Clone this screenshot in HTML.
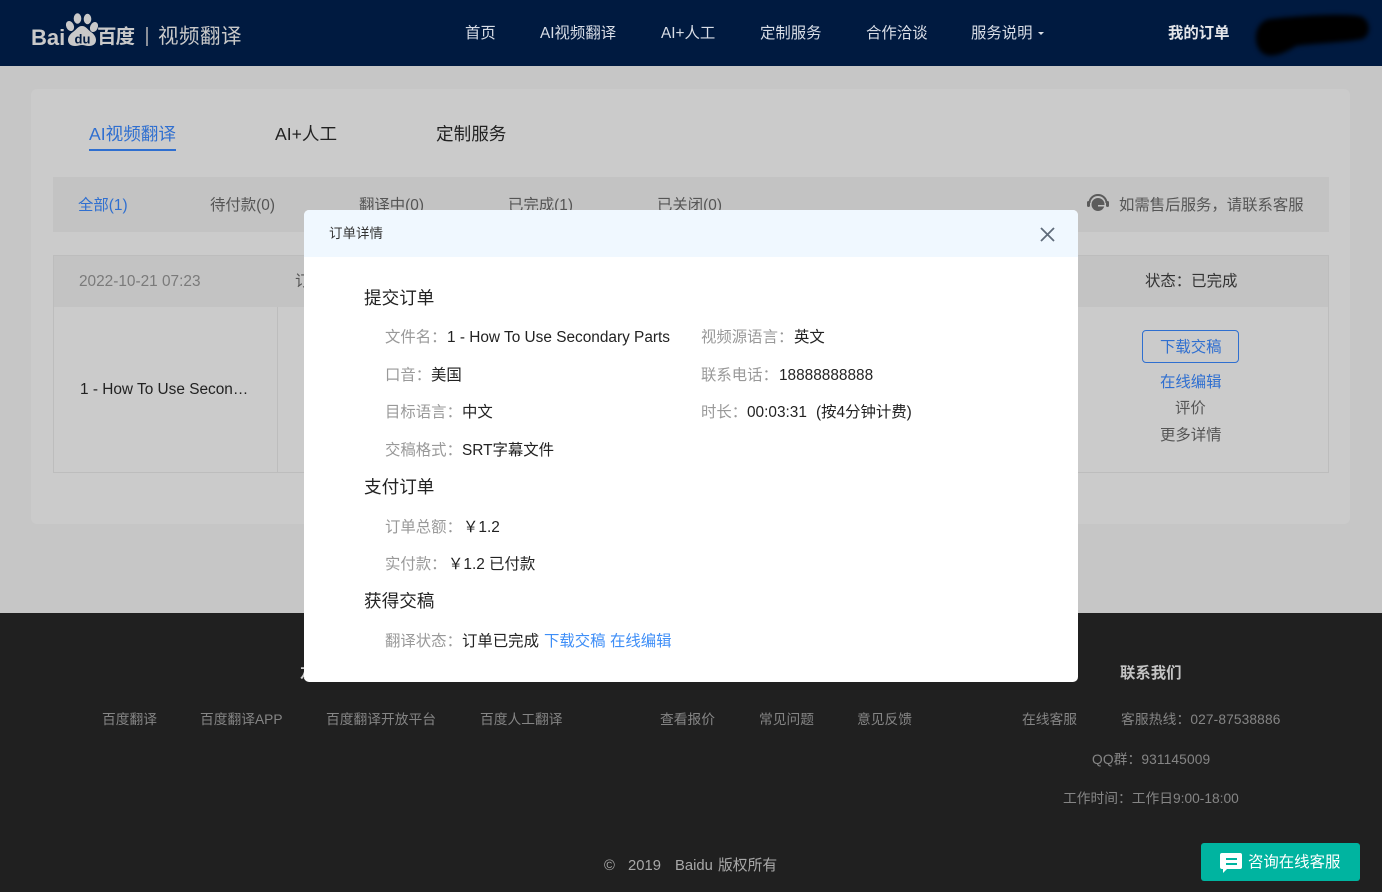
<!DOCTYPE html>
<html lang="zh"><head><meta charset="utf-8"><title>订单详情</title>
<style>
html,body{margin:0;padding:0}
body{width:1382px;height:892px;position:relative;overflow:hidden;background:#c6c6c6;font-family:"Liberation Sans","Noto Sans CJK SC",sans-serif;font-size:15.4px;color:#222}
.b{position:absolute}
.t{position:absolute;white-space:nowrap;line-height:22px;height:22px}
.g{color:#999}.d{color:#222}.bl{color:#2f6fd0}.lk{color:#3e8ef7}
.n{color:#d8dde6;top:23px}
.f{color:#858585;font-size:13.75px}
.m{color:#555}
.h{font-size:17.6px;line-height:24px;height:24px}
</style></head><body>
<!-- header -->
<div class="b" style="left:0;top:0;width:1382px;height:66px;background:#001a40"></div>
<svg class="b" style="left:28px;top:10px" width="112" height="40" viewBox="0 0 112 40">
<g fill="#c9c9c9"><ellipse cx="49.500" cy="8.500" rx="3.800" ry="5.200"/><ellipse cx="59.500" cy="9" rx="3.800" ry="5.200"/><ellipse cx="42" cy="16" rx="3.800" ry="5.200" transform="rotate(-25 42 16)"/><ellipse cx="66" cy="17" rx="3.800" ry="5.200" transform="rotate(25 66 17)"/><path d="M54 16c4 0 6 4 9 6 3 2 5 5 5 8 0 4-3 6-7 6-3 0-5-1-7-1s-4 1-7 1c-4 0-7-2-7-6 0-3 2-6 5-8 3-2 5-6 9-6z"/></g>
<text x="3" y="35" font-family="Liberation Sans" font-weight="700" font-size="22" fill="#c9c9c9">Bai</text>
<text x="46.500" y="33.500" font-family="Liberation Sans" font-weight="700" font-size="13" fill="#001a40">du</text>
</svg>
<div class="t" style="left:97px;top:26px;font-size:19.500px;line-height:22px;height:22px;color:#c9c9c9;font-weight:700;letter-spacing:-1px">百度</div>
<div class="b" style="left:146px;top:27px;width:2px;height:19px;background:#8a8f99"></div>
<div class="t" style="left:158px;top:25px;font-size:20.500px;line-height:24px;height:24px;color:#c9c9c9;letter-spacing:.5px">视频翻译</div>
<div class="t n" style="left:465px">首页</div>
<div class="t n" style="left:540px">AI视频翻译</div>
<div class="t n" style="left:661px">AI+人工</div>
<div class="t n" style="left:760px">定制服务</div>
<div class="t n" style="left:866px">合作洽谈</div>
<div class="t n" style="left:971px">服务说明</div>
<div class="b" style="left:1038px;top:32px;border-left:3px solid transparent;border-right:3px solid transparent;border-top:3px solid #d8dde6"></div>
<div class="t" style="left:1168px;top:23px;color:#e4e6ea;font-weight:700">我的订单</div>
<svg class="b" style="left:1245px;top:5px" width="135" height="65"><path d="M24 14C50 11 95 8 114 11c12 2 13 20 3 23-20 4-46 4-66 7-6 4-20 12-30 9C7 45 7 18 24 14z" fill="#000" style="filter:blur(2.500px)"/></svg>
<!-- main card -->
<div class="b" style="left:31px;top:89px;width:1319px;height:435px;background:#cbcbcb;border-radius:6px"></div>
<div class="t bl h" style="left:89px;top:122px">AI视频翻译</div>
<div class="b" style="left:89px;top:149px;width:87px;height:2px;background:#2f6fd0"></div>
<div class="t d h" style="left:275px;top:122px">AI+人工</div>
<div class="t d h" style="left:436px;top:122px">定制服务</div>
<div class="b" style="left:53px;top:177px;width:1276px;height:55px;background:#c3c3c3"></div>
<div class="t bl" style="left:78px;top:195px">全部(1)</div>
<div class="t m" style="left:210px;top:195px">待付款(0)</div>
<div class="t m" style="left:359px;top:195px">翻译中(0)</div>
<div class="t m" style="left:508px;top:195px">已完成(1)</div>
<div class="t m" style="left:657px;top:195px">已关闭(0)</div>
<svg class="b" style="left:1086px;top:193px" width="24" height="20" viewBox="0 0 24 20"><path d="M3.500 10a8.500 8 0 0 1 17 0" fill="none" stroke="#5b5b5b" stroke-width="2"/><rect x="1" y="8" width="3" height="6" rx="1.500" fill="#5b5b5b"/><rect x="20" y="8" width="3" height="6" rx="1.500" fill="#5b5b5b"/><circle cx="12" cy="11.500" r="6.500" fill="#5b5b5b"/><rect x="12" y="12" width="7" height="1.500" fill="#c3c3c3"/></svg>
<div class="t m" style="left:1119px;top:195px">如需售后服务，请联系客服</div>
<!-- order table -->
<div class="b" style="left:53px;top:255px;width:1274px;height:216px;border:1px solid #bdbdbd"></div>
<div class="b" style="left:54px;top:256px;width:1274px;height:51px;background:#c3c3c3"></div>
<div class="b" style="left:277px;top:307px;width:1px;height:165px;background:#bdbdbd"></div>
<div class="t" style="left:79px;top:271px;color:#7a7a7a">2022-10-21 07:23</div>
<div class="t m" style="left:295px;top:271px">订</div>
<div class="t d" style="left:80px;top:379px">1 - How To Use Secon…</div>
<div class="t" style="left:1145px;top:271px;color:#333">状态：已完成</div>
<div class="b" style="left:1142px;top:330px;width:95px;height:31px;border:1px solid #2f6fd0;border-radius:4px"></div>
<div class="t bl" style="left:1160px;top:337px">下载交稿</div>
<div class="t bl" style="left:1160px;top:372px">在线编辑</div>
<div class="t m" style="left:1175px;top:398px">评价</div>
<div class="t m" style="left:1160px;top:425px">更多详情</div>
<!-- footer -->
<div class="b" style="left:0;top:613px;width:1382px;height:279px;background:#202020"></div>
<div class="t" style="left:300px;top:663px;color:#d0d0d0;font-weight:700">友</div>
<div class="t" style="left:1120px;top:663px;color:#c4c4c4;font-weight:700">联系我们</div>
<div class="t f" style="left:102px;top:709px">百度翻译</div>
<div class="t f" style="left:200px;top:709px">百度翻译APP</div>
<div class="t f" style="left:326px;top:709px">百度翻译开放平台</div>
<div class="t f" style="left:480px;top:709px">百度人工翻译</div>
<div class="t f" style="left:660px;top:709px">查看报价</div>
<div class="t f" style="left:759px;top:709px">常见问题</div>
<div class="t f" style="left:857px;top:709px">意见反馈</div>
<div class="t f" style="left:1022px;top:709px">在线客服</div>
<div class="t f" style="left:1121px;top:709px;letter-spacing:.12px">客服热线：027-87538886</div>
<div class="t f" style="left:1092px;top:749px;letter-spacing:.12px">QQ群：931145009</div>
<div class="t f" style="left:1063px;top:788px">工作时间：工作日9:00-18:00</div>
<div class="t" style="left:604px;top:855px;color:#a8a8a8;font-size:14.800px">©</div>
<div class="t" style="left:628px;top:855px;color:#a8a8a8;font-size:14.800px">2019</div>
<div class="t" style="left:675px;top:855px;color:#a8a8a8;font-size:14.800px">Baidu</div>
<div class="t" style="left:718px;top:855px;color:#a8a8a8;font-size:14.800px">版权所有</div>
<!-- consult -->
<div class="b" style="left:1201px;top:843px;width:159px;height:38px;background:#00b4a0;border-radius:3px"></div>
<svg class="b" style="left:1220px;top:853px" width="23" height="22" viewBox="0 0 23 22"><path d="M2 0h18a2 2 0 0 1 2 2v12a2 2 0 0 1-2 2H7l-4 4v-4H2a2 2 0 0 1-2-2V2a2 2 0 0 1 2-2z" fill="#fff"/><rect x="6" y="5" width="11" height="2" fill="#00b4a0"/><rect x="6" y="10" width="11" height="2" fill="#00b4a0"/></svg>
<div class="t" style="left:1248px;top:852px;color:#fff;font-size:15.400px">咨询在线客服</div>
<!-- modal -->
<div class="b" style="left:304px;top:210px;width:774px;height:472px;background:#fff;border-radius:5px;overflow:hidden">
<div class="b" style="left:0;top:0;width:774px;height:47px;background:#f0f8ff"></div>
</div>
<div class="t" style="left:329px;top:223px;font-size:13.500px;color:#333">订单详情</div>
<svg class="b" style="left:1040px;top:227px" width="15" height="15"><path d="M1 1l13 13M14 1L1 14" stroke="#5f6b7a" stroke-width="1.800" fill="none"/></svg>
<div class="t d h" style="left:364px;top:286px">提交订单</div>
<div class="t g" style="left:385px;top:327px">文件名：</div><div class="t d" style="left:447px;top:327px">1 - How To Use Secondary Parts</div>
<div class="t g" style="left:701px;top:327px">视频源语言：</div><div class="t d" style="left:794px;top:327px">英文</div>
<div class="t g" style="left:385px;top:365px">口音：</div><div class="t d" style="left:431px;top:365px">美国</div>
<div class="t g" style="left:701px;top:365px">联系电话：</div><div class="t d" style="left:779px;top:365px">18888888888</div>
<div class="t g" style="left:385px;top:402px">目标语言：</div><div class="t d" style="left:462px;top:402px">中文</div>
<div class="t g" style="left:701px;top:402px">时长：</div><div class="t d" style="left:747px;top:402px">00:03:31</div><div class="t d" style="left:816px;top:402px">(按4分钟计费)</div>
<div class="t g" style="left:385px;top:440px">交稿格式：</div><div class="t d" style="left:462px;top:440px">SRT字幕文件</div>
<div class="t d h" style="left:364px;top:475px">支付订单</div>
<div class="t g" style="left:385px;top:517px">订单总额：</div><div class="t d" style="left:463px;top:517px">￥1.2</div>
<div class="t g" style="left:385px;top:554px">实付款：</div><div class="t d" style="left:448px;top:554px">￥1.2 已付款</div>
<div class="t d h" style="left:364px;top:589px">获得交稿</div>
<div class="t g" style="left:385px;top:631px">翻译状态：</div><div class="t d" style="left:462px;top:631px">订单已完成</div>
<div class="t lk" style="left:544px;top:631px">下载交稿</div><div class="t lk" style="left:610px;top:631px">在线编辑</div>
</body></html>
